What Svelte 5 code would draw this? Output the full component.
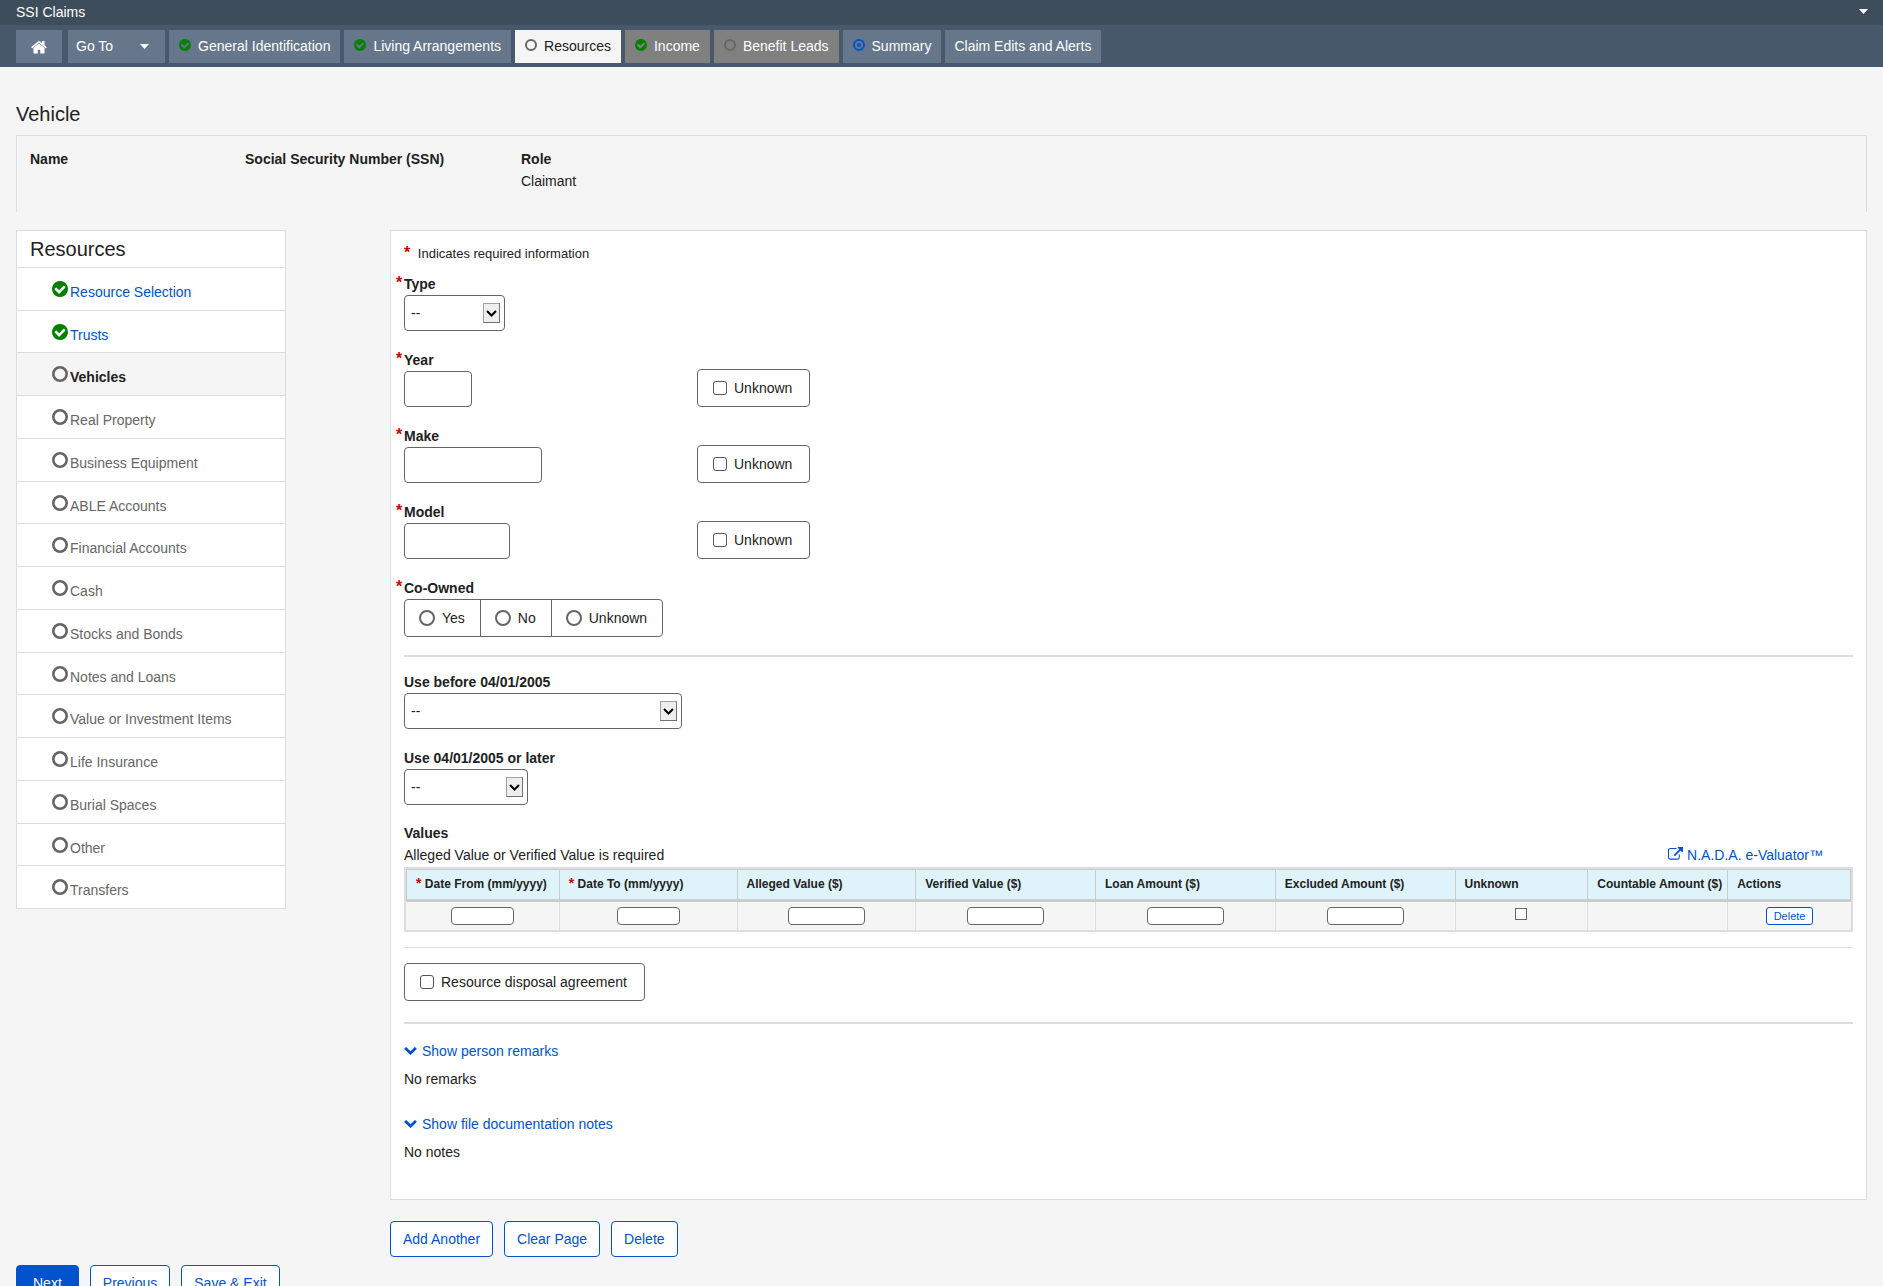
<script lang="ts">
  type TabState = 'done' | 'open' | 'current' | 'none';
  type Tab = { label: string; state: TabState; active?: boolean; disabled?: boolean };

  const tabs: Tab[] = [
    { label: 'General Identification', state: 'done' },
    { label: 'Living Arrangements', state: 'done' },
    { label: 'Resources', state: 'open', active: true },
    { label: 'Income', state: 'done', disabled: true },
    { label: 'Benefit Leads', state: 'open', disabled: true },
    { label: 'Summary', state: 'current' },
    { label: 'Claim Edits and Alerts', state: 'none' }
  ];

  const steps = [
    { label: 'Resource Selection', done: true },
    { label: 'Trusts', done: true },
    { label: 'Vehicles', current: true },
    { label: 'Real Property' },
    { label: 'Business Equipment' },
    { label: 'ABLE Accounts' },
    { label: 'Financial Accounts' },
    { label: 'Cash' },
    { label: 'Stocks and Bonds' },
    { label: 'Notes and Loans' },
    { label: 'Value or Investment Items' },
    { label: 'Life Insurance' },
    { label: 'Burial Spaces' },
    { label: 'Other' },
    { label: 'Transfers' }
  ];

  // share = column width relative to the others
  const columns = [
    { label: 'Date From (mm/yyyy)', kind: 'date', share: 153, required: true },
    { label: 'Date To (mm/yyyy)', kind: 'date', share: 178, required: true },
    { label: 'Alleged Value ($)', kind: 'amount', share: 179 },
    { label: 'Verified Value ($)', kind: 'amount', share: 180 },
    { label: 'Loan Amount ($)', kind: 'amount', share: 180 },
    { label: 'Excluded Amount ($)', kind: 'amount', share: 180 },
    { label: 'Unknown', kind: 'check', share: 133 },
    { label: 'Countable Amount ($)', kind: 'empty', share: 140 },
    { label: 'Actions', kind: 'action', share: 124 }
  ];
  const totalShare = columns.reduce((s, c) => s + c.share, 0);

  const details = [
    { id: 'year', label: 'Year' },
    { id: 'make', label: 'Make' },
    { id: 'model', label: 'Model' }
  ];

  let values = $state({ year: '', make: '', model: '' } as Record<string, string>);
  let unknown = $state({ year: false, make: false, model: false } as Record<string, boolean>);
  let coOwned = $state('');

  const CHECK =
    'M1412 734q0-28-18-46l-91-90q-19-19-45-19t-45 19l-408 407-226-226q-19-19-45-19t-45 19l-91 90q-18 18-18 46 0 27 18 45l362 362q19 19 45 19 27 0 46-19l543-543q18-18 18-45zm252 162q0 209-103 385.5t-279.5 279.5-385.5 103-385.5-103-279.5-279.5-103-385.5 103-385.5 279.5-279.5 385.5-103 385.5 103 279.5 279.5 103 385.5z';
</script>

{#snippet stateIcon(state: string)}
  {#if state === 'done'}
    <svg class="state done" viewBox="128 128 1536 1536" aria-hidden="true"><path d={CHECK} /></svg>
  {:else}
    <svg class="state {state}" viewBox="0 0 16 16" aria-hidden="true">
      <circle class="ring" cx="8" cy="8" r="6.7" />
      {#if state === 'current'}<circle class="dot" cx="8" cy="8" r="2.7" />{/if}
    </svg>
  {/if}
{/snippet}

{#snippet caret()}
  <svg class="caret" viewBox="0 0 9 5" aria-hidden="true"><path d="M0 0h9L4.500 5z" /></svg>
{/snippet}

{#snippet dropdown(id: string)}
  <div class="select {id}">
    <select {id}>
      <option>--</option>
    </select>
    <span class="arrow" aria-hidden="true">
      <svg viewBox="0 0 11 7"><path d="M1 1l4.500 4.500L10 1" /></svg>
    </span>
  </div>
{/snippet}

{#snippet chevron()}
  <svg class="chevron" viewBox="90 530 1612 1040" aria-hidden="true">
    <path
      d="M1683 808l-742 741q-19 19-45 19t-45-19l-742-741q-19-19-19-45.500t19-45.500l166-165q19-19 45-19t45 19l531 531 531-531q19-19 45-19t45 19l166 165q19 19 19 45.500t-19 45.500z"
    />
  </svg>
{/snippet}

<div class="app">
  <header>
    <div class="topbar">
      <span>SSI Claims</span>
      <button class="menu" aria-label="User menu">{@render caret()}</button>
    </div>
    <nav class="tabs">
      <a class="tab home" href="#home" aria-label="Home">
        <svg viewBox="64 200 1664 1340" aria-hidden="true">
          <path
            d="M1472 992v480q0 26-19 45t-45 19h-384v-384h-256v384h-384q-26 0-45-19t-19-45v-480q0-1 .5-3t.5-3l575-474 575 474q1 2 1 6zm223-69l-62 74q-8 9-21 11h-3q-13 0-21-7l-692-577-692 577q-12 8-24 7-13-2-21-11l-62-74q-8-10-7-23.500t11-21.500l719-599q32-26 76-26t76 26l244 204v-195q0-14 9-23t23-9h192q14 0 23 9t9 23v408l219 182q10 8 11 21.500t-7 23.500z"
          />
        </svg>
      </a>
      <button class="tab goto">Go To {@render caret()}</button>
      {#each tabs as t (t.label)}
        <a class="tab" class:active={t.active} class:disabled={t.disabled} href="#tab">
          {#if t.state !== 'none'}{@render stateIcon(t.state)}{/if}
          <span>{t.label}</span>
        </a>
      {/each}
    </nav>
  </header>

  <main>
    <h1>Vehicle</h1>

    <dl class="person">
      <div><dt>Name</dt><dd></dd></div>
      <div><dt>Social Security Number (SSN)</dt><dd></dd></div>
      <div><dt>Role</dt><dd>Claimant</dd></div>
    </dl>

    <div class="columns">
      <aside>
        <h2>Resources</h2>
        <ul>
          {#each steps as s (s.label)}
            <li class:current={s.current}>
              {@render stateIcon(s.done ? 'done' : 'open')}
              {#if s.done}
                <a href="#step">{s.label}</a>
              {:else}
                <span>{s.label}</span>
              {/if}
            </li>
          {/each}
        </ul>
      </aside>

      <div class="content">
        <section class="panel">
          <p class="legend"><span class="star">*</span> Indicates required information</p>

          <div class="field">
            <label class="name" for="type"><span class="star">*</span>Type</label>
            {@render dropdown('type')}
          </div>

          {#each details as d (d.id)}
            <div class="field pair">
              <div>
                <label class="name" for={d.id}><span class="star">*</span>{d.label}</label>
                <input class="text {d.id}" id={d.id} type="text" bind:value={values[d.id]} />
              </div>
              <label class="check">
                <input type="checkbox" bind:checked={unknown[d.id]} /> Unknown
              </label>
            </div>
          {/each}

          <fieldset>
            <legend class="name"><span class="star">*</span>Co-Owned</legend>
            <div class="radios">
              {#each ['Yes', 'No', 'Unknown'] as option (option)}
                <label><input type="radio" name="co-owned" value={option} bind:group={coOwned} /> {option}</label>
              {/each}
            </div>
          </fieldset>

          <hr class="thick" />

          <div class="field">
            <label class="name" for="before">Use before 04/01/2005</label>
            {@render dropdown('before')}
          </div>
          <div class="field">
            <label class="name" for="later">Use 04/01/2005 or later</label>
            {@render dropdown('later')}
          </div>

          <h3 class="name">Values</h3>
          <div class="values-note">
            <span>Alleged Value or Verified Value is required</span>
            <a href="#nada">
              <svg viewBox="0 64 1792 1472" aria-hidden="true">
                <path
                  d="M1408 928v320q0 119-84.500 203.500t-203.500 84.500h-832q-119 0-203.500-84.500t-84.500-203.500v-832q0-119 84.500-203.500t203.500-84.500h704q14 0 23 9t9 23v64q0 14-9 23t-23 9h-704q-66 0-113 47t-47 113v832q0 66 47 113t113 47h832q66 0 113-47t47-113v-320q0-14 9-23t23-9h64q14 0 23 9t9 23zm384-864v512q0 26-19 45t-45 19-45-19l-176-176-652 652q-10 10-23 10t-23-10l-114-114q-10-10-10-23t10-23l652-652-176-176q-19-19-19-45t19-45 45-19h512q26 0 45 19t19 45z"
                />
              </svg>
              N.A.D.A. e-Valuator™
            </a>
          </div>

          <table>
            <colgroup>
              {#each columns as c (c.label)}
                <col style={`width:${(c.share / totalShare) * 100}%`} />
              {/each}
            </colgroup>
            <thead>
              <tr>
                {#each columns as c (c.label)}
                  <th scope="col">{#if c.required}<span class="star">*</span>{' '}{/if}{c.label}</th>
                {/each}
              </tr>
            </thead>
            <tbody>
              <tr>
                {#each columns as c (c.label)}
                  <td>
                    {#if c.kind === 'date' || c.kind === 'amount'}
                      <input class={c.kind} type="text" aria-label={c.label} />
                    {:else if c.kind === 'check'}
                      <input type="checkbox" aria-label={c.label} />
                    {:else if c.kind === 'action'}
                      <button class="small">Delete</button>
                    {/if}
                  </td>
                {/each}
              </tr>
            </tbody>
          </table>

          <hr />

          <label class="check"><input type="checkbox" /> Resource disposal agreement</label>

          <hr class="thick remarks-rule" />

          <button class="toggle">{@render chevron()} Show person remarks</button>
          <p class="note">No remarks</p>
          <button class="toggle">{@render chevron()} Show file documentation notes</button>
          <p class="note">No notes</p>
        </section>

        <div class="actions">
          <button class="btn">Add Another</button>
          <button class="btn">Clear Page</button>
          <button class="btn">Delete</button>
        </div>
      </div>
    </div>

    <div class="actions footer">
      <button class="btn primary">Next</button>
      <button class="btn">Previous</button>
      <button class="btn">Save &amp; Exit</button>
    </div>
  </main>
</div>

<style>
  :global(body) {
    margin: 0;
    background: #f5f5f5;
  }
  .app {
    height: 100vh;
    overflow-y: auto;
    scrollbar-width: none;
    font: 14px/22px Arial, 'Liberation Sans', sans-serif;
    color: #212121;
    background: #f5f5f5;
  }
  .app :is(*, *::before) {
    box-sizing: border-box;
  }
  button,
  input,
  select {
    margin: 0;
    font: inherit;
    color: inherit;
  }
  button {
    padding: 0;
    border: 0;
    background: none;
    cursor: pointer;
  }
  a {
    color: #0053cc;
    text-decoration: none;
  }
  h1,
  h2,
  h3,
  p,
  ul,
  dl,
  dd {
    margin: 0;
    padding: 0;
  }

  .topbar {
    display: flex;
    align-items: center;
    justify-content: space-between;
    height: 25px;
    padding: 0 15px 2px 16px;
    color: #fff;
    background: #3e4d5b;
  }
  .menu {
    display: flex;
  }
  .caret {
    width: 9px;
    height: 5px;
    fill: #fff;
  }
  .tabs {
    display: flex;
    gap: 4px;
    padding: 5px 16px 4px;
    background: #48596b;
  }
  .tab {
    display: flex;
    align-items: baseline;
    gap: 6px;
    height: 33px;
    padding: 0 10px 0 9px;
    line-height: 33px;
    color: #fff;
    background: #66778b;
  }
  .tab.active {
    color: #212121;
    background: #f5f5f5;
  }
  .tab.disabled {
    background: #808080;
  }
  .tab.home {
    align-items: center;
    margin-right: 2px;
    padding: 0 15px;
  }
  .home svg {
    width: 16px;
    height: 14px;
    fill: #fff;
  }
  .tab.goto {
    align-items: center;
    gap: 27px;
    padding: 0 16px 0 8px;
  }

  .state {
    flex: none;
    width: 14px;
    height: 12px;
    fill: #008000;
  }
  .ring {
    fill: none;
    stroke: #666;
    stroke-width: 2.6;
  }
  .state.current .ring {
    stroke: #0053cc;
  }
  .dot {
    fill: #0053cc;
  }

  main {
    padding: 35px 16px 0;
  }
  h1 {
    font-size: 20px;
    font-weight: 400;
    line-height: 24px;
  }
  .person {
    display: grid;
    grid-template-columns: 215px 276px 1fr;
    margin: 9px 0 18px;
    padding: 12px 13px 20px;
    border: 1px solid #ddd;
    border-bottom: 0;
  }
  dt {
    font-weight: 700;
  }

  .columns {
    display: grid;
    grid-template-columns: 270px 1fr;
    align-items: start;
    gap: 104px;
  }
  aside {
    border: 1px solid #ddd;
    border-bottom: 0;
    background: #fff;
  }
  h2 {
    padding-left: 13px;
    border-bottom: 1px solid #ddd;
    font-size: 20px;
    font-weight: 400;
    line-height: 36px;
  }
  ul {
    display: grid;
    grid-auto-rows: 1fr;
    min-height: 641px;
    list-style: none;
  }
  li {
    display: flex;
    align-items: baseline;
    gap: 2px;
    padding: 13px 0 6px 35px;
    border-bottom: 1px solid #ddd;
    color: #666;
  }
  li.current {
    font-weight: 700;
    color: #212121;
    background: #f5f5f5;
  }
  li .state {
    width: 16px;
    height: 16px;
  }

  .panel {
    padding: 13px 13px 36px;
    border: 1px solid #ddd;
    background: #fff;
  }
  .star {
    font-size: 16px;
    font-weight: 700;
    line-height: 16px;
    color: #c00;
  }
  .legend {
    margin-bottom: 9px;
    font-size: 13px;
    line-height: 20px;
  }
  .legend .star {
    margin-right: 4px;
  }
  .name {
    display: block;
    position: relative;
    padding: 0;
    font-size: 14px;
    font-weight: 700;
  }
  .name .star {
    position: absolute;
    left: -8px;
    top: 2px;
  }
  .field {
    margin-bottom: 18px;
  }
  .pair {
    display: grid;
    grid-template-columns: 293px 1fr;
    align-items: end;
    justify-items: start;
  }
  .text {
    display: block;
    width: 138px;
    height: 36px;
    padding: 0 6px;
    border: 1px solid #666;
    border-radius: 4px;
    background: #fff;
  }
  .text.year {
    width: 68px;
  }
  .text.model {
    width: 106px;
  }
  .pair .check {
    margin-top: -2px;
  }

  .select {
    position: relative;
    width: 101px;
  }
  .select.before {
    width: 278px;
  }
  .select.later {
    width: 124px;
  }
  select {
    display: block;
    width: 100%;
    height: 36px;
    padding: 0 24px 0 6px;
    border: 1px solid #666;
    border-radius: 4px;
    appearance: none;
    background: #fff;
  }
  .arrow {
    display: flex;
    align-items: center;
    justify-content: center;
    position: absolute;
    top: 8px;
    right: 5px;
    width: 17px;
    height: 20px;
    border: 1px solid #707070;
    border-top-color: #a0a0a0;
    border-left-color: #a0a0a0;
    background: #eee;
    pointer-events: none;
  }
  .arrow svg {
    width: 11px;
    height: 7px;
    fill: none;
    stroke: #000;
    stroke-width: 2;
  }

  .check {
    display: inline-flex;
    align-items: center;
    gap: 7px;
    height: 38px;
    padding: 0 17px 0 15px;
    border: 1px solid #666;
    border-radius: 4px;
    vertical-align: top;
  }
  .check input {
    width: 14px;
    height: 14px;
    border: 1px solid #555;
    border-radius: 3px;
    appearance: none;
    background: #fff;
  }
  .check input:checked,
  td input:checked {
    background: #0053cc;
  }

  fieldset {
    min-width: 0;
    margin: 0;
    padding: 0;
    border: 0;
  }
  .radios {
    display: inline-flex;
    height: 38px;
    border: 1px solid #666;
    border-radius: 4px;
    vertical-align: top;
  }
  .radios label {
    display: flex;
    align-items: center;
    gap: 7px;
    padding: 0 15px 0 14px;
  }
  .radios label + label {
    border-left: 1px solid #666;
  }
  .radios input {
    width: 16px;
    height: 16px;
    border: 2px solid #666;
    border-radius: 50%;
    appearance: none;
    background: #fff;
  }
  .radios input:checked {
    background: #0053cc;
  }

  hr {
    height: 1px;
    margin: 15px 0;
    border: 0;
    background: #ddd;
  }
  hr.thick {
    height: 2px;
    margin: 18px 0 14px;
  }
  hr.remarks-rule {
    margin: 21px 0 16px;
  }

  h3 {
    margin-top: -1px;
  }
  .values-note {
    display: flex;
    justify-content: space-between;
    padding: 0 30px 1px 0;
  }
  .values-note svg {
    width: 15px;
    height: 13px;
    fill: #0053cc;
  }

  table {
    width: 100%;
    table-layout: fixed;
    border: 2px solid #ddd;
    border-collapse: separate;
    border-spacing: 0;
    font-size: 12px;
  }
  th {
    height: 33px;
    padding: 0 0 2px 9px;
    border: solid #ccc;
    border-width: 1px 0 3px 1px;
    text-align: left;
    line-height: 16px;
    white-space: nowrap;
    background: #dff3fa;
  }
  th:last-child {
    border-right-width: 1px;
  }
  th .star {
    font-size: 14px;
  }
  td {
    height: 28px;
    padding: 0;
    border-left: 1px solid #ddd;
    text-align: center;
    line-height: 0;
    background: #f5f5f5;
  }
  td:first-child {
    border-left: 0;
  }
  td input {
    width: 77px;
    height: 18px;
    padding: 0 4px;
    border: 1px solid #666;
    border-radius: 4px;
    background: #fff;
    vertical-align: middle;
  }
  td input.date {
    width: 63px;
  }
  td input[type='checkbox'] {
    width: 12px;
    height: 12px;
    margin-bottom: 4px;
    padding: 0;
    border-radius: 0;
    appearance: none;
  }
  .small {
    height: 18px;
    padding: 0 7px;
    border: 1px solid #0053cc;
    border-radius: 3px;
    font-size: 11px;
    line-height: 16px;
    color: #0053cc;
    background: #fff;
    vertical-align: middle;
  }

  .toggle {
    display: flex;
    align-items: center;
    gap: 5px;
    color: #0053cc;
  }
  .chevron {
    width: 13px;
    height: 8px;
    fill: #0053cc;
  }
  .note {
    margin-top: 6px;
  }
  .note + .toggle {
    margin-top: 23px;
  }

  .actions {
    display: flex;
    gap: 11px;
    margin-top: 21px;
  }
  .footer {
    margin: 8px 0 30px;
  }
  .btn {
    height: 36px;
    padding: 0 12px;
    border: 1px solid #0053cc;
    border-radius: 4px;
    color: #0053cc;
    background: #fff;
  }
  .btn.primary {
    padding: 0 16px;
    color: #fff;
    background: #0053cc;
  }
</style>
